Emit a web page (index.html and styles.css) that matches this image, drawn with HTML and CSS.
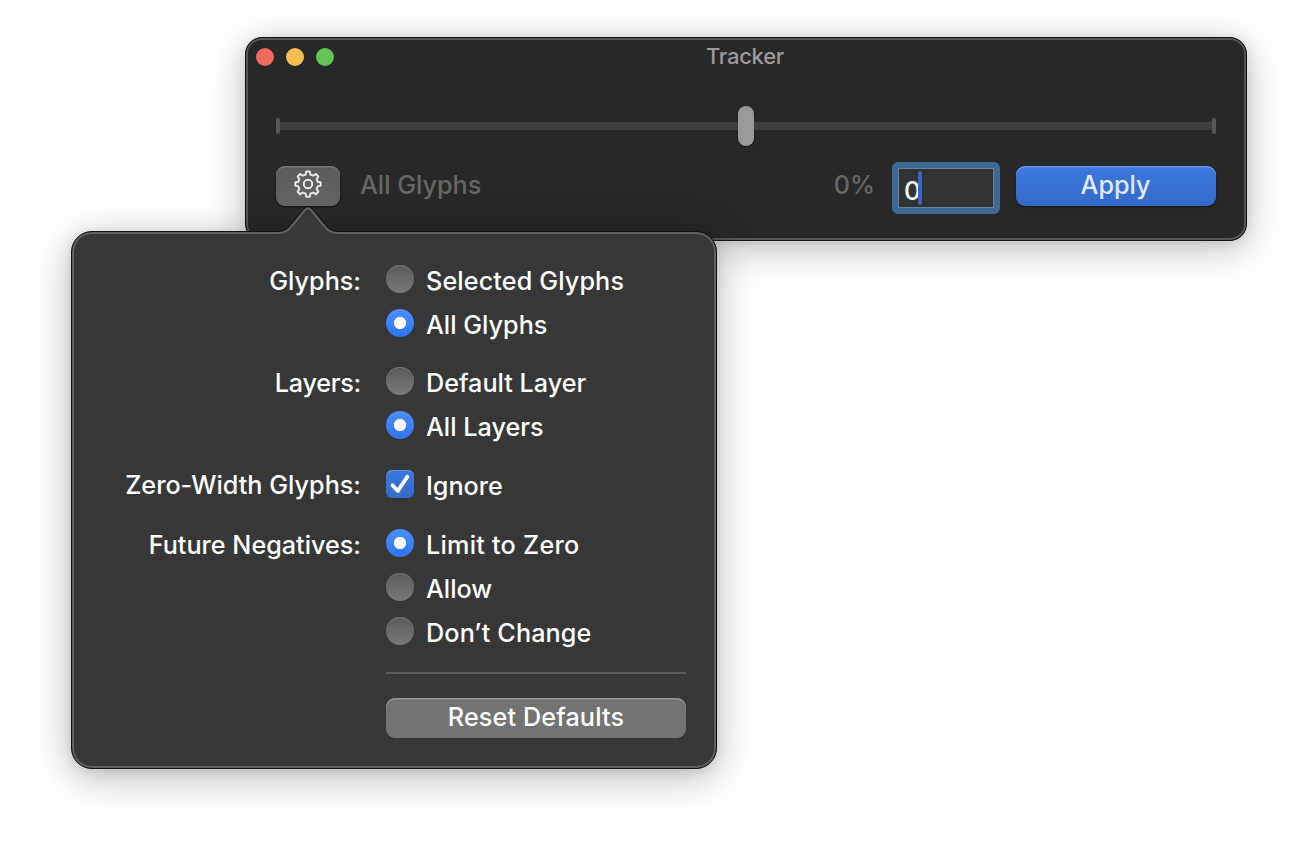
FILE: index.html
```html
<!DOCTYPE html>
<html lang="en">
<head>
<meta charset="utf-8">
<title>Tracker</title>
<link rel="stylesheet" href="styles.css">
</head>
<body>
<main class="desktop">
  <section class="window">
    <header class="titlebar">
      <span class="lights"><i class="light close"></i><i class="light minimize"></i><i class="light zoom"></i></span>
      <h1 class="title">Tracker</h1>
    </header>
    <div class="slider"><i class="tick"></i><i class="rail"></i><i class="thumb"></i><i class="rail"></i><i class="tick"></i></div>
    <div class="controls">
      <button class="gear" aria-label="Options">
        <svg width="28" height="28" viewBox="0 0 28 28" fill="none" stroke="#e9e9e9" stroke-width="2" stroke-linejoin="round">
          <path d="M12.3 1.5h3.4l.8 3.2q1.4.3 2.6 1l2.8-1.7 2.4 2.4-1.7 2.8q.7 1.2 1 2.5l3.1.8v3.1l-3.1.8q-.3 1.4-1 2.6l1.7 2.8-2.4 2.4-2.8-1.7q-1.2.7-2.6 1l-.8 3.2h-3.4l-.8-3.2q-1.4-.3-2.6-1l-2.8 1.7-2.4-2.4 1.7-2.8q-.7-1.2-1-2.6l-3.1-.8v-3.1l3.1-.8q.3-1.3 1-2.5l-1.7-2.8 2.4-2.4 2.8 1.7q1.2-.7 2.6-1z"/>
          <circle cx="14" cy="14" r="4.2"/>
        </svg>
      </button>
      <span class="scope">All Glyphs</span>
      <span class="percent">0%</span>
      <span class="field"><span class="value">0</span><i class="caret"></i></span>
      <button class="apply">Apply</button>
    </div>
  </section>

  <section class="popover">
    <svg class="arrow" width="64" height="28" viewBox="0 0 64 28" fill="none">
      <path d="M1 28V26H2C11 26 14 21 17.5 17L28.8 3.2Q32 -.6 35.2 3.2L46.5 17C50 21 53 26 62 26H63V28Z" fill="#373737"/>
      <path d="M1 24.5H2C10 24.5 13.5 19.5 16.5 15.8L28 1.8Q32 -2.4 36 1.8L47.5 15.8C50.5 19.5 54 24.5 62 24.5H63" stroke="#0c0c0c"/>
      <path d="M1 26H2C11 26 14 21 17.5 17L28.8 3.2Q32 -.6 35.2 3.2L46.5 17C50 21 53 26 62 26H63" stroke="#636363" stroke-width="2"/>
    </svg>
    <div class="form">
      <div class="group">
        <span class="label">Glyphs:</span>
        <div class="options">
          <div class="option"><i class="radio"></i><span class="wide">Selected Glyphs</span></div>
          <div class="option"><i class="radio on"></i><span>All Glyphs</span></div>
        </div>
      </div>
      <div class="group">
        <span class="label tight">Layers:</span>
        <div class="options">
          <div class="option"><i class="radio"></i><span>Default Layer</span></div>
          <div class="option"><i class="radio on"></i><span>All Layers</span></div>
        </div>
      </div>
      <div class="group">
        <span class="label raised">Zero-Width Glyphs:</span>
        <div class="options">
          <div class="option"><i class="check"><svg width="28" height="28" viewBox="0 0 28 28" fill="none" stroke="#fff" stroke-width="3.8" stroke-linecap="round" stroke-linejoin="round"><path d="M6.5 15.3L11.8 21L21.3 6.8"/></svg></i><span>Ignore</span></div>
        </div>
      </div>
      <div class="group">
        <span class="label">Future Negatives:</span>
        <div class="options">
          <div class="option"><i class="radio on"></i><span class="wider">Limit to Zero</span></div>
          <div class="option"><i class="radio"></i><span>Allow</span></div>
          <div class="option"><i class="radio"></i><span class="wide">Don’t Change</span></div>
        </div>
      </div>
      <hr class="divider">
      <button class="reset">Reset Defaults</button>
    </div>
  </section>
</main>
</body>
</html>
```
FILE: styles.css
```css
* { box-sizing: border-box; }
body { margin: 0; background: #fff; font-family: Inter, sans-serif; font-size: 25.2px; font-weight: 500; color: #fff; }
i { display: block; flex: none; }
button { font: inherit; letter-spacing: inherit; border: 0; padding: 0; margin: 0; }
.desktop { position: relative; width: 1292px; height: 848px; overflow: hidden; }

.window {
  position: absolute; left: 245px; top: 37px; width: 1002px; height: 204px;
  border: 1px solid #141414; border-radius: 17px; background: #282828;
  box-shadow: inset 0 0 0 2px #555, 0 8px 38px rgba(0,0,0,.25), 0 2px 12px rgba(0,0,0,.1);
  padding: 0 30px;
}
.titlebar { display: grid; grid-template-columns: 100px 1fr 100px; height: 38px; align-items: center; margin: 0 -21px; }
.lights { display: flex; gap: 12px; padding-left: 1px; }
.light { width: 18px; height: 18px; border-radius: 50%; }
.close { background: #ed6a5f; }
.minimize { background: #f5bf4f; }
.zoom { background: #61c554; }
.title { margin: 0; padding: 0 2px 2px 0; text-align: center; font-size: 22px; font-weight: 500; letter-spacing: -0.25px; line-height: 36px; color: #9b9b9b; }
.slider { display: flex; align-items: center; height: 40px; margin-top: 30px; }
.tick { width: 4px; height: 16px; border-radius: 2px; background: #575757; }
.rail { flex: 1; height: 8px; background: #3e3e3e; }
.thumb { width: 16px; height: 40px; border-radius: 8px; background: #999; box-shadow: 0 1px 2px rgba(0,0,0,.4); }
.controls { display: flex; align-items: center; height: 52px; margin-top: 16px; letter-spacing: -0.02px; }
.gear {
  width: 64px; height: 40px; margin-top: -4px; border-radius: 9px; display: grid; place-items: center; padding: 0 1px 4px 0;
  background: linear-gradient(#5b5b5b, #656565); box-shadow: inset 0 1.5px 0 #777, 0 1px 2px rgba(0,0,0,.5);
}
.scope { margin-left: 20px; margin-top: -6px; color: #666; }
.percent { margin-left: auto; margin-top: -6px; color: #666; }
.field {
  display: flex; align-items: center; width: 108px; height: 52px; margin-left: 17px; padding-left: 6px;
  border: 6px solid #3d6994; border-radius: 6px; background: #333; box-shadow: inset 0 0 0 1px #688199;
}
.value { padding-top: 4px; font-size: 26px; font-weight: 500; letter-spacing: -1px; }
.caret { width: 4px; height: 34px; border-radius: 2px; background: #3566c8; margin-left: -2px; margin-top: -1px; }
.apply {
  width: 200px; height: 40px; margin-left: 16px; margin-top: -4px; padding: 0 1px 2px 0; border-radius: 9px; color: #e0e9fa;
  background: linear-gradient(#3c79df, #336bc7); box-shadow: inset 0 1.5px 0 #6494e5, 0 1px 2px rgba(0,0,0,.5);
}

.popover {
  position: absolute; left: 71px; top: 231px; width: 646px; height: 538px;
  border: 1px solid #111; border-radius: 21px; background: #373737;
  box-shadow: inset 0 0 0 2px #606060, 0 8px 40px rgba(0,0,0,.27), 0 2px 12px rgba(0,0,0,.12);
}
.arrow { position: absolute; left: 204px; top: -25px; overflow: visible; }
.form { display: flex; flex-direction: column; padding: 33px 30px 30px; }
.group { display: grid; grid-template-columns: 259px 300px; column-gap: 25px; margin-bottom: 31px; }
.group:nth-child(1) { margin-bottom: 30px; }
.group:nth-child(4) { margin-bottom: 27px; }
.label { height: 28px; text-align: right; line-height: 32px; white-space: nowrap; }
.raised { margin-top: -1px; }
.tight { letter-spacing: -0.25px; }
.wide { letter-spacing: 0.12px; }
.wider { letter-spacing: 0.24px; }
.options { display: flex; flex-direction: column; gap: 16px; }
.option { display: flex; height: 28px; gap: 12px; line-height: 32px; white-space: nowrap; }
.radio {
  width: 28px; height: 28px; border-radius: 50%;
  background: linear-gradient(#5a5a5a, #797979); box-shadow: inset 0 1px 0 #777;
}
.radio.on { background: radial-gradient(circle, #fff 5.7px, transparent 6.5px), linear-gradient(#4a90fb, #2f74f2); box-shadow: none; }
.check { width: 28px; height: 28px; border-radius: 6px; background: linear-gradient(#3c79df, #336bc7); box-shadow: inset 0 1px 0 #6494e5; }
.check svg { display: block; }
.divider { width: 300px; height: 2px; margin: 0 0 24px 284px; border: 0; background: #5c5c5c; }
.reset {
  width: 300px; height: 40px; margin-left: 284px; padding-bottom: 2px; border-radius: 9px; color: #fff; letter-spacing: 0.12px;
  background: #737373; box-shadow: inset 0 1.5px 0 #969696;
}
```
